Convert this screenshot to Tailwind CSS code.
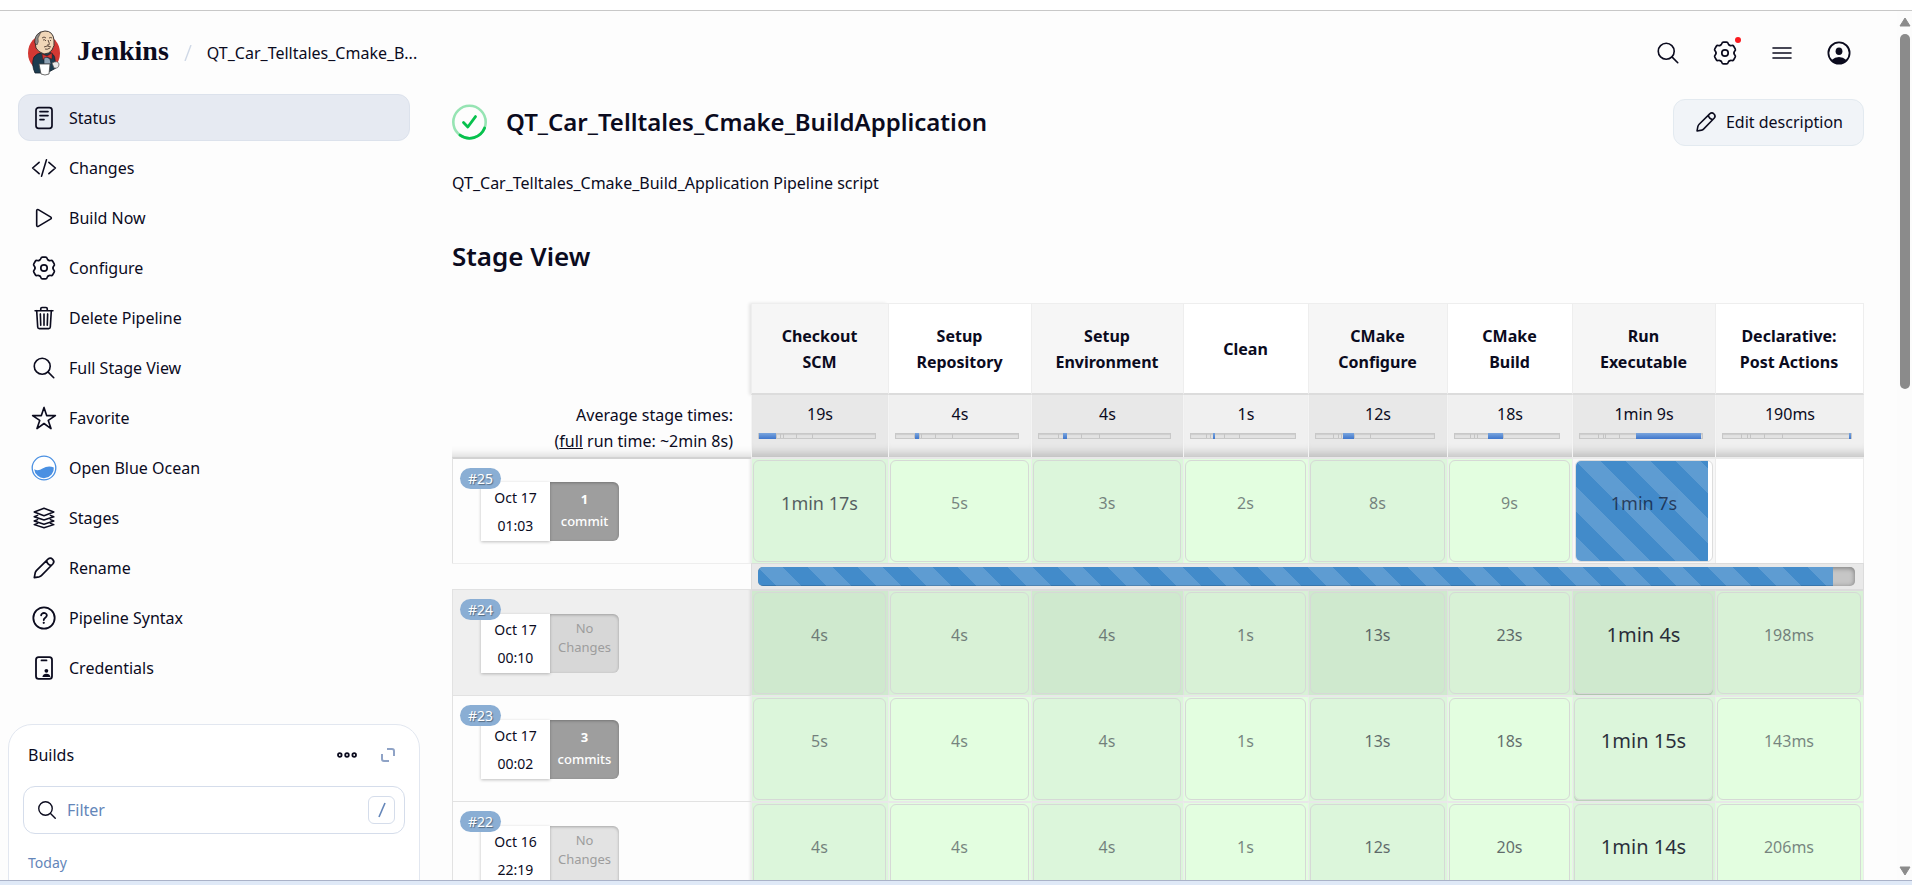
<!DOCTYPE html>
<html lang="en">
<head>
<meta charset="utf-8">
<title>QT_Car_Telltales_Cmake_BuildApplication - Jenkins</title>
<script src="https://cdn.jsdelivr.net/npm/@tailwindcss/browser@4"></script>
</head>
<body class="h-screen overflow-hidden flex flex-col bg-[#fdfdfd] text-[#0b0b1e] font-['Noto_Sans','Open_Sans',sans-serif] text-base">
<svg class="hidden" aria-hidden="true">
  <defs>
    <symbol id="search" viewBox="0 0 512 512"><g fill="none" stroke="currentColor" stroke-width="32" stroke-linecap="round"><circle cx="221" cy="221" r="157"/><path d="M338 338l110 110"/></g></symbol>
    <g id="tooth"><path d="M-4.5 -7.8Q-3.4 -8.4 -3.1 -9.6Q-2.8 -10.9 -1.5 -10.9H1.5Q2.8 -10.9 3.1 -9.6Q3.4 -8.4 4.5 -7.8"/></g>
    <symbol id="gear" viewBox="-13 -13 26 26"><g fill="none" stroke="currentColor" stroke-width="1.7" stroke-linecap="round"><use href="#tooth"/><use href="#tooth" transform="rotate(60)"/><use href="#tooth" transform="rotate(120)"/><use href="#tooth" transform="rotate(180)"/><use href="#tooth" transform="rotate(240)"/><use href="#tooth" transform="rotate(300)"/><circle r="3.2"/></g></symbol>
    <symbol id="pencil" viewBox="-13 -13 26 26"><path d="M-9.7 9.7L-8.8 4.8Q-8.4 3.4 -7.4 2.4L4 -8.8A3.4 3.4 0 0 1 8.8 -4L-2.4 7.4Q-3.4 8.4 -4.8 8.8ZM2.6 -7.4Q3.2 -3.2 7.4 -2.6" fill="none" stroke="currentColor" stroke-width="1.7" stroke-linejoin="round"/></symbol>
  </defs>
</svg>

<div class="h-[10px] shrink-0 bg-white"></div>
<div class="flex-1 min-h-0 flex border-t border-[#c8c8c8]">
  <div class="flex-1 min-w-0 overflow-hidden">
    <header class="h-[83px] flex items-center pl-[27px] pr-[45px]">
      <a href="#" class="flex items-center gap-4">
        <svg class="w-[34px] h-[46px] shrink-0" viewBox="0 0 34 46" aria-hidden="true">
          <ellipse cx="17" cy="23" rx="16" ry="18" fill="#d33833"/>
          <path d="M7 27Q10 23 15 23L22 22Q28 24 28 30L29 38L20 43H8Q4 34 7 27Z" fill="#1d3c4f" stroke="#14202b" stroke-width=".8"/>
          <path d="M8 12Q8 2 18 1Q26 1 27 10Q28 16 25 20Q22 24 17 24Q11 22 9 18Z" fill="#f0d6b7" stroke="#2b2523" stroke-width=".9"/>
          <path d="M8 13Q7 5 14 2L11 8Q12 12 10 15Z" fill="#8d8a88" stroke="#2b2523" stroke-width=".5"/>
          <path d="M15 8Q17 6 19 8M22 8Q24 7 25 8M16 10Q18 9 19 11M23 10L24 11M21 10Q23 14 22 15L20 15M17 17Q20 15 24 17M18 19Q20 20 23 18" fill="none" stroke="#3a2a22" stroke-width=".8"/>
          <path d="M15 24L20 26L25 23V29L20 27L16 30Z" fill="#d33833" stroke="#5b1210" stroke-width=".5"/>
          <path d="M17 28Q20 26 23 29L24 34H17Z" fill="#8fa3b4" stroke="#14202b" stroke-width=".6"/>
          <path d="M12 34H23L22 44Q18 46 14 44Z" fill="#fff" stroke="#4a4a4a" stroke-width=".8"/>
          <path d="M25 33Q31 30 32 34Q32 39 27 38Z" fill="#e9e9e9" stroke="#555" stroke-width=".7"/>
        </svg>
        <span class="font-['Liberation_Serif',serif] font-bold text-[28px] leading-8 pb-1">Jenkins</span>
      </a>
      <svg class="w-2 h-4 ml-[15px] mr-[15px] shrink-0" viewBox="0 0 8 16" aria-hidden="true"><path d="M7 0L1 16" stroke="#cfd8e6" stroke-width="1.4"/></svg>
      <a href="#" class="whitespace-nowrap">QT_Car_Telltales_Cmake_B...</a>
      <nav class="ml-auto flex items-center gap-[31px]" aria-label="Header actions">
        <button aria-label="Search"><svg class="size-[26px]"><use href="#search"/></svg></button>
        <button aria-label="Manage Jenkins" class="relative"><svg class="size-[26px]"><use href="#gear"/></svg><span class="absolute -top-[3px] -right-[3px] size-[6px] rounded-full bg-[#fb1a1f]"></span></button>
        <button aria-label="Menu"><svg class="size-[26px]" viewBox="0 0 26 26"><path d="M4 8h18M4 13h18M4 18h18" stroke="currentColor" stroke-width="1.6" stroke-linecap="round"/></svg></button>
        <button aria-label="Account"><svg class="size-[26px]" viewBox="-13 -13 26 26"><circle r="10.6" fill="none" stroke="currentColor" stroke-width="1.8"/><ellipse cy="-1.8" rx="3.4" ry="3.8" fill="currentColor"/><path d="M-7.4 7Q-4 4 0 4T7.4 7Q4 10.6 0 10.6T-7.4 7Z" fill="currentColor"/></svg></button>
      </nav>
    </header>

    <div class="flex">
      <aside class="w-[420px] shrink-0 pl-[18px]">
        <nav class="flex flex-col gap-[3px] pr-[10px]" aria-label="Tasks">
          <a href="#" class="h-[47px] flex items-center gap-3 pl-3 rounded-xl border border-[#dce2ec] bg-[#e6eaf2]"><svg class="size-[26px]" viewBox="0 0 26 26" fill="none" stroke="currentColor" stroke-width="1.7" stroke-linecap="round"><rect x="5" y="2.7" width="16" height="20.6" rx="2.6"/><path d="M9 6.6h8M9 10.6h8M9 14.6h4"/></svg>Status</a>
          <a href="#" class="h-[47px] flex items-center gap-3 pl-[13px]"><svg class="size-[26px]" viewBox="0 0 512 512" fill="none" stroke="currentColor" stroke-width="32" stroke-linecap="round" stroke-linejoin="round"><path d="M160 368L32 256l128-112M352 368l128-112-128-112M304 96l-96 320"/></svg>Changes</a>
          <a href="#" class="h-[47px] flex items-center gap-3 pl-[13px]"><svg class="size-[26px]" viewBox="0 0 512 512" fill="none" stroke="currentColor" stroke-width="32"><path d="M112 111v290c0 17.44 17 28.52 31 20.16l247.9-148.37c12.12-7.25 12.12-26.33 0-33.58L143 90.84c-14-8.36-31 2.72-31 20.16z"/></svg>Build Now</a>
          <a href="#" class="h-[47px] flex items-center gap-3 pl-[13px]"><svg class="size-[26px]"><use href="#gear"/></svg>Configure</a>
          <a href="#" class="h-[47px] flex items-center gap-3 pl-[13px]"><svg class="size-[26px]" viewBox="0 0 512 512" fill="none" stroke="currentColor" stroke-width="32" stroke-linecap="round" stroke-linejoin="round"><path d="M112 112l20 320c.95 18.49 14.4 32 32 32h184c17.67 0 30.87-13.51 32-32l20-320M80 112h352M192 112V72a24 24 0 0124-24h80a24 24 0 0124 24v40M256 176v224M184 176l8 224M328 176l-8 224"/></svg>Delete Pipeline</a>
          <a href="#" class="h-[47px] flex items-center gap-3 pl-[13px]"><svg class="size-[26px]"><use href="#search"/></svg>Full Stage View</a>
          <a href="#" class="h-[47px] flex items-center gap-3 pl-[13px]"><svg class="size-[26px]" viewBox="0 0 512 512" fill="none" stroke="currentColor" stroke-width="32" stroke-linejoin="round"><path d="M480 208H308L256 48l-52 160H32l140 96-54 160 138-100 138 100-54-160z"/></svg>Favorite</a>
          <a href="#" class="h-[47px] flex items-center gap-3 pl-[13px]"><svg class="size-[26px]" viewBox="-13 -13 26 26"><circle r="11.8" fill="#fff" stroke="#4a90e2" stroke-width="1.3"/><path d="M-9.8 1.2Q-6 3.4 -1.5 .6Q4 -3 9.8 -.6A9.8 9.8 0 0 1 -9.8 1.2Z" fill="#4a90e2"/></svg>Open Blue Ocean</a>
          <a href="#" class="h-[47px] flex items-center gap-3 pl-[13px]"><svg class="size-[26px]" viewBox="-13 -13 26 26" fill="none" stroke="currentColor" stroke-width="1.5" stroke-linejoin="round" stroke-linecap="round"><path d="M0 -9.8L9.8 -6L0 -2.2L-9.8 -6ZM-6.4 -2.6L-9.8 -1.2L0 2L9.8 -1.2L6.4 -2.6M-6.4 1.6L-9.8 3L0 6.2L9.8 3L6.4 1.6M-6.4 5.4L-9.8 6.6L0 9.8L9.8 6.6L6.4 5.4"/></svg>Stages</a>
          <a href="#" class="h-[47px] flex items-center gap-3 pl-[13px]"><svg class="size-[26px]"><use href="#pencil"/></svg>Rename</a>
          <a href="#" class="h-[47px] flex items-center gap-3 pl-[13px]"><svg class="size-[26px]" viewBox="0 0 512 512" fill="none" stroke="currentColor" stroke-width="36" stroke-linecap="round"><circle cx="256" cy="256" r="210"/><path d="M200 202.3s.84-17.5 19.57-32.6C230.68 160.8 244 158.2 256 158c10.93-.14 20.69 1.67 26.53 4.45 10 4.76 29.47 16.4 29.47 41.1 0 26-17 37.8-36.37 50.8S251 281.4 251 296"/><circle cx="251" cy="350" r="22" fill="currentColor" stroke="none"/></svg>Pipeline Syntax</a>
          <a href="#" class="h-[47px] flex items-center gap-3 pl-[13px]"><svg class="size-[26px]" viewBox="0 0 26 26" fill="none" stroke="currentColor" stroke-width="1.8" stroke-linecap="round"><rect x="5" y="2.2" width="16" height="21.6" rx="2.6"/><path d="M10.5 5.4h5"/><circle cx="15.4" cy="15.8" r="1.9" fill="currentColor" stroke="none"/><path d="M11.4 22Q12 18.8 15.4 18.8T19.4 22Z" fill="currentColor" stroke="none"/></svg>Credentials</a>
        </nav>

        <section class="-ml-[10px] mt-[33px] h-[400px] w-[412px] border border-[#e2e7f0] rounded-3xl bg-white px-[14px] pt-3" aria-label="Builds">
          <div class="h-9 flex items-center pl-[5px] pr-[9px]">
            <h2 class="mr-auto">Builds</h2>
            <button aria-label="More" class="mr-[23px]"><svg class="w-5 h-2" viewBox="0 0 20 8" fill="none" stroke="currentColor" stroke-width="1.8"><circle cx="2.8" cy="4" r="1.8"/><circle cx="10" cy="4" r="1.8"/><circle cx="17.2" cy="4" r="1.8"/></svg></button>
            <button aria-label="Expand" class="text-[#8fa3c6]"><svg class="size-4" viewBox="0 0 16 16" fill="none" stroke="currentColor" stroke-width="2"><path d="M7 2H12Q14 2 14 4V9M2 7V12Q2 14 4 14H9"/></svg></button>
          </div>
          <label class="mt-[13px] h-12 flex items-center pl-3 pr-[9px] border border-[#d5ddeb] rounded-xl">
            <svg class="size-[22px] shrink-0"><use href="#search"/></svg>
            <input type="text" placeholder="Filter" aria-label="Filter builds" class="ml-[9px] flex-1 min-w-0 outline-none placeholder:text-[#6486b9]">
            <kbd class="w-[27px] h-7 flex items-center justify-center border border-[#d5ddeb] rounded-md"><svg class="w-2 h-4" viewBox="0 0 8 16" aria-hidden="true"><path d="M7 1L1 15" stroke="#6486b9" stroke-width="1.6"/></svg></kbd>
          </label>
          <h3 class="mt-[17px] pl-[5px] text-sm leading-6 text-[#6486b9]">Today</h3>
        </section>
      </aside>

      <main class="flex-1 min-w-0 pl-8 pr-[33px]">
        <div class="h-[56px] flex items-center gap-[18px]">
          <svg class="size-[36px] shrink-0" viewBox="0 0 36 36" fill="none" stroke-linecap="round"><circle cx="17.5" cy="18" r="16.2" stroke="#96e4b3" stroke-width="2.6"/><path d="M8 31.1A16.2 16.2 0 0 0 32.6 24" stroke="#07c14d" stroke-width="2.8"/><path d="M11.5 18.6L15.8 23L23.5 12.6" stroke="#07c14d" stroke-width="2.8" stroke-linejoin="round"/></svg>
          <h1 class="text-2xl font-semibold whitespace-nowrap">QT_Car_Telltales_Cmake_BuildApplication</h1>
          <button class="ml-auto h-[47px] shrink-0 flex items-center gap-2 px-5 rounded-xl border border-[#e3eaf0] bg-[#f1f4f8]"><svg class="size-6"><use href="#pencil"/></svg>Edit description</button>
        </div>
        <p class="mt-[21px] leading-6">QT_Car_Telltales_Cmake_Build_Application Pipeline script</p>
        <h2 class="mt-[45px] text-[26px] leading-8 font-semibold">Stage View</h2>

        <table id="stages" class="mt-[31px] w-full table-fixed border-separate border-spacing-0 text-center leading-[26px]">
          <colgroup><col class="w-[299px]"><col class="w-[137px]"><col class="w-[143px]"><col class="w-[152px]"><col class="w-[125px]"><col class="w-[139px]"><col class="w-[125px]"><col class="w-[143px]"><col class="w-[149px]"></colgroup>
          <thead></thead>
          <tbody></tbody>
        </table>
      </main>
    </div>
  </div>

  <div class="w-[15px] shrink-0 bg-[#fcfcfc] flex flex-col items-center pt-[6px] pb-1" aria-hidden="true">
    <svg class="w-3 h-[10px] shrink-0" viewBox="0 0 12 10"><path d="M6 1L11 9H1Z" fill="#8b8b8b" stroke="#8b8b8b" stroke-linejoin="round"/></svg>
    <div class="mt-[7px] w-[10px] h-[355px] rounded-full bg-[#8b8b8b]"></div>
    <svg class="mt-auto w-3 h-[10px] shrink-0" viewBox="0 0 12 10"><path d="M6 9L11 1H1Z" fill="#8b8b8b" stroke="#8b8b8b" stroke-linejoin="round"/></svg>
  </div>
</div>
<div class="h-[5px] shrink-0 border-t border-[#aab2c8] bg-[#dfe9f7]"></div>

<script>
const stages = [
  { name: 'Checkout<br>SCM', avg: '19s', start: 0, width: 14.4 },
  { name: 'Setup<br>Repository', avg: '4s', start: 15.2, width: 3.4 },
  { name: 'Setup<br>Environment', avg: '4s', start: 18.7, width: 3 },
  { name: 'Clean', avg: '1s', start: 21.5, width: 1.9 },
  { name: 'CMake<br>Configure', avg: '12s', start: 23, width: 9 },
  { name: 'CMake<br>Build', avg: '18s', start: 32, width: 14 },
  { name: 'Run<br>Executable', avg: '1min 9s', start: 46, width: 53.4 },
  { name: 'Declarative:<br>Post Actions', avg: '190ms', start: 98.4, width: 1.6 },
];
const builds = [
  { id: 25, date: 'Oct 17', time: '01:03', commits: 1, cells: ['1min 17s', '5s', '3s', '2s', '8s', '9s', '1min 7s', ''] },
  { id: 24, date: 'Oct 17', time: '00:10', commits: 0, hover: true, cells: ['4s', '4s', '4s', '1s', '13s', '23s', '1min 4s', '198ms'] },
  { id: 23, date: 'Oct 17', time: '00:02', commits: 3, cells: ['5s', '4s', '4s', '1s', '13s', '18s', '1min 15s', '143ms'] },
  { id: 22, date: 'Oct 16', time: '22:19', commits: 0, cells: ['4s', '4s', '4s', '1s', '12s', '20s', '1min 14s', '206ms'] },
];
const stripes = 'bg-[#428bca] bg-size-[50px_50px] bg-[linear-gradient(45deg,#ffffff26_25%,transparent_25%,transparent_50%,#ffffff26_50%,#ffffff26_75%,transparent_75%)]';

const head = stages.map((s, i) => `<th scope="col" class="h-[92px] p-0 pr-px pt-px border-t border-l border-b-2 border-t-[#eee] border-l-[#eee] border-b-[#dcdcdc] font-bold ${i % 2 ? 'bg-white' : 'bg-[#f6f6f6]'} ${i === 7 ? 'border-r border-r-[#eee]' : ''} ${i === 0 ? 'shadow-[-2px_0_3px_#00000018]' : ''}">${s.name}</th>`).join('');
const totals = stages.map((s, i) => `<td class="h-[62px] p-0 pt-[6px] align-top border-l border-[#f4f4f4] shadow-[inset_0_-12px_10px_-8px_#00000030] ${i % 2 ? 'bg-[#f0f0f0]' : 'bg-[#e8e8e8]'}">${s.avg}
  <div class="mt-[6px] ml-[6px] mr-3 h-[6px] relative border border-[#c8c8c8] bg-[#e2e2e2] shadow-[inset_0_1px_1px_#00000018]">
    ${[14.4, 18.5, 20.8, 32, 46].map(x => `<span class="absolute inset-y-0 w-px bg-[#c4c4c4]" style="left:${x}%"></span>`).join('')}
    <span class="absolute -inset-y-px bg-linear-to-b from-[#7aa5dd] to-[#3f76cc]" style="left:${s.start}%;width:${s.width}%"></span>
  </div></td>`).join('');
document.querySelector('#stages thead').innerHTML = `<tr><td class="p-0"></td>${head}</tr>
  <tr><td class="p-0 pt-[7px] pr-[18px] text-right align-top shadow-[inset_0_-12px_10px_-10px_#00000028]">Average stage times:<br>(<a href="#" class="underline">full</a> run time: ~2min 8s)</td>${totals}</tr>`;

function textClass(t) {
  if (t === '1min 17s' || t === '1min 7s') return 'text-lg leading-[26px] opacity-65';
  if (t.startsWith('1min')) return 'text-xl leading-[26px] opacity-85';
  return t.length === 3 ? 'text-base leading-[26px] opacity-60' : 'text-base leading-[26px] opacity-50';
}
function cell(b, i) {
  const t = b.cells[i], last = i === 7 ? 'border-r' : '';
  const deep = i === 6 && b.id < 25;
  if (b.id === 25 && i === 7) return `<td class="p-0 border-t-2 border-l border-r border-[#ececec] bg-white"></td>`;
  if (b.id === 25 && i === 6) return `<td class="p-0 pl-[2px] pr-[2px] pt-px align-top border-t-2 border-l border-[#ececec] bg-[#f7f7f7]">
    <div class="h-[102px] relative overflow-hidden rounded-md border border-[#ddd] bg-white flex justify-center pt-[29px]">
      <span class="absolute inset-y-0 left-0 ${stripes}" style="width:97%"></span><span class="relative ${textClass(t)}">${t}</span></div></td>`;
  const bg = b.hover ? (i % 2 ? 'bg-[#d8f1d6]' : 'bg-[#cfe9ce]') : (i % 2 ? 'bg-[#e3fee0]' : 'bg-[#dcf6db]');
  const line = b.hover ? 'border-t-[#dcdcdc] border-x-[#e0dfe0]' : 'border-t-[#e8e8e8] border-x-[#ececec]';
  return `<td class="p-0 pl-px pr-[2px] pt-px align-top border-t-2 border-l ${line} ${last} ${bg}">
    <div class="h-[102px] rounded-md border border-[#d6d9d6] flex justify-center pt-[29px] ${deep ? 'shadow-[0_2px_1px_#00000026]' : ''}"><span class="${textClass(t)}">${t}</span></div></td>`;
}
const rows = builds.map((b, n) => `<tr>
  <td class="h-[106px] p-0 align-top border-t border-l border-[#e2e2e2] shadow-[inset_-3px_0_3px_-2px_#00000018] ${b.hover ? 'bg-[#efefef]' : 'bg-[#fdfdfd]'} ${n ? '' : 'border-t-2 border-t-[#d2d2d2]'}">
    <div class="relative flex pl-[28px] text-sm ${n ? 'pt-[24px]' : 'pt-[23px]'}">
      <span class="absolute left-[7px] top-[9px] w-[41px] h-[21px] z-1 rounded-full bg-[#8aaed4] text-white leading-[21px] [text-shadow:1px_1px_1px_#0006]">#${b.id}</span>
      <div class="w-[69px] h-[59px] bg-white shadow-[0_1px_3px_#00000040] leading-7 flex flex-col pt-[2px]"><span>${b.date}</span><span>${b.time}</span></div>
      ${b.commits
        ? `<div class="w-[69px] h-[59px] rounded-r-md bg-[#9e9e9e] text-white font-medium shadow-[inset_0_1px_3px_#0004] leading-[22px] pt-[6px] text-[13px]"><b>${b.commits}</b><br>commit${b.commits > 1 ? 's' : ''}</div>`
        : `<div class="w-[69px] h-[59px] rounded-r-md ${b.hover ? 'bg-[#d7d7d7]' : 'bg-[#e3e3e3]'} text-[#9d9d9d] shadow-[inset_0_1px_3px_#0004] leading-[19px] pt-[5px] text-[13px]">No<br>Changes</div>`}
    </div>
  </td>${stages.map((_, i) => cell(b, i)).join('')}</tr>`);
rows.splice(1, 0, `<tr><td class="p-0 border-t border-[#eee]"></td><td colspan="8" class="h-[26px] p-0 pl-[6px] pr-2 border-t border-x border-[#dcdcdc] bg-[#e9e9e9]">
  <div class="h-[19px] rounded-[5px] overflow-hidden bg-[#c6c6c6] shadow-[inset_0_1px_5px_#00000066]"><div class="h-full shadow-[inset_0_-1px_0_#00000026] ${stripes}" style="width:98%"></div></div></td></tr>`);
document.querySelector('#stages tbody').innerHTML = rows.join('');
</script>
</body>
</html>
